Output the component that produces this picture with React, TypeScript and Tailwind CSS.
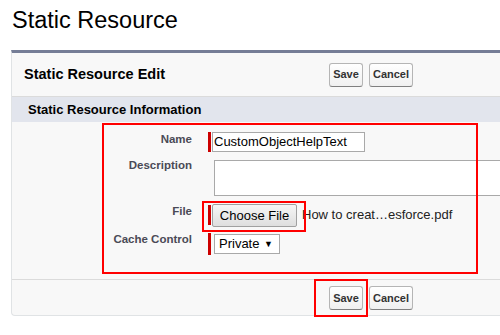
const FONT = "font-['Liberation_Sans',Arial,sans-serif]";

function SfButton({ label, width }: { label: string; width: string }) {
  return (
    <button
      className={`${width} h-[24px] rounded-[3px] border border-[#b5b5b5] border-b-[#7f7f7f] bg-[linear-gradient(#ffffff,#f0f0f0)] text-center text-[11px] font-bold text-[#333]`}
    >
      {label}
    </button>
  );
}

function Label({ text }: { text: string }) {
  return (
    <div className="w-[180px] shrink-0 text-right text-[11.5px] font-bold leading-[14px] text-[#4a4a56]">
      {text}
    </div>
  );
}

export default function App() {
  return (
    <div className={`relative h-[335px] w-[500px] overflow-hidden bg-white ${FONT}`}>
      <h1 className="pl-[12px] pt-[6px] text-[23.5px] leading-[28px] text-[#000]">
        Static Resource
      </h1>

      <div className="ml-[11px] mt-[16px] w-[495px] rounded-b-[4px] border-b border-l border-t-[3px] border-[#e0e3e5] border-t-[#757d96] bg-[#f8f8f8]">
        {/* header */}
        <div className="flex h-[44px] items-center border-b border-[#dbdbdb]">
          <h2 className="w-[317px] pl-[12px] text-[14.5px] font-bold text-[#000]">
            Static Resource Edit
          </h2>
          <div className="flex gap-[6px]">
            <SfButton label="Save" width="w-[34px]" />
            <SfButton label="Cancel" width="w-[44px]" />
          </div>
        </div>

        {/* section */}
        <div className="flex h-[25px] items-center bg-[#e2e5ed] pl-[16px] text-[13px] font-bold text-[#000]">
          Static Resource Information
        </div>

        <div className="pb-[24px]">
          <div className="mt-[10px] flex items-start">
            <Label text="Name" />
            <div className="flex pl-[16px]">
              <span className="h-[20px] w-[3px] bg-[#c00]" />
              <div className="ml-[1px] flex h-[20px] w-[153px] items-center border border-[#a9a9a9] bg-white pl-[1px] text-[13px] text-[#000]">
                CustomObjectHelpText
              </div>
            </div>
          </div>

          <div className="mt-[6px] flex items-start">
            <Label text="Description" />
            <div className="flex pl-[16px]">
              <div className="ml-[6px] mt-[2px] h-[36px] w-[300px] border border-[#a9a9a9] bg-white" />
            </div>
          </div>

          <div className="mt-[8px] flex items-start">
            <Label text="File" />
            <div className="flex items-start pl-[16px]">
              <span className="mt-[1px] h-[20px] w-[3px] bg-[#c00]" />
              <button className="ml-[1px] h-[23px] w-[85px] rounded-[2px] border border-[#a0a0a0] bg-[linear-gradient(#f6f6f6,#dedede)] text-[13px] text-[#000]">
                Choose File
              </button>
              <span className="ml-[5px] mt-[3px] text-[13px] leading-[16px] text-[#222]">
                How to creat…esforce.pdf
              </span>
            </div>
          </div>

          <div className="mt-[5px] flex items-start">
            <Label text="Cache Control" />
            <div className="flex items-start pl-[16px]">
              <span className="mt-[1px] h-[22px] w-[3px] bg-[#c00]" />
              <div className="ml-[3px] mt-[2px] flex h-[20px] w-[66px] items-center justify-between border border-[#a9a9a9] bg-white pl-[4px] pr-[6px] text-[13px] text-[#000]">
                <span>Private</span>
                <span className="text-[9px] leading-none">▼</span>
              </div>
            </div>
          </div>
        </div>

        {/* footer */}
        <div className="flex gap-[6px] border-t border-[#dbdbdb] pb-[5px] pl-[317px] pt-[6px]">
          <SfButton label="Save" width="w-[34px]" />
          <SfButton label="Cancel" width="w-[44px]" />
        </div>
      </div>

      {/* annotation boxes */}
      <div className="absolute left-[102px] top-[123px] h-[151px] w-[376px] border-2 border-[#ff0000]" />
      <div className="absolute left-[202px] top-[201px] h-[31px] w-[104px] border-2 border-[#ff0000]" />
      <div className="absolute left-[314px] top-[279px] h-[38px] w-[54px] border-2 border-[#ff0000]" />
    </div>
  );
}
